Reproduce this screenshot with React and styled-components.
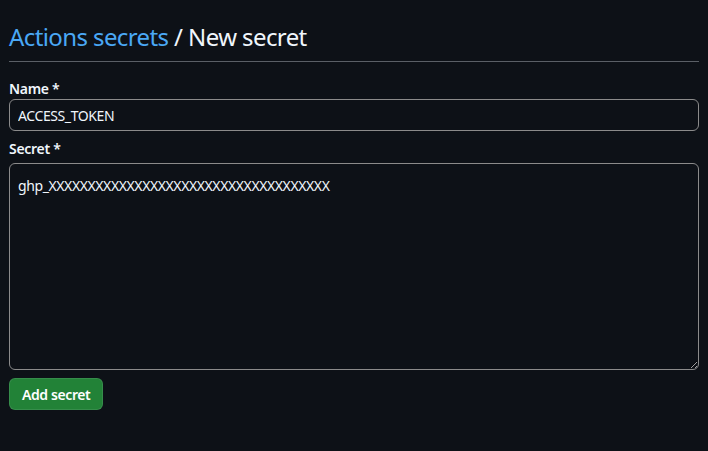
import styled, { createGlobalStyle } from "styled-components";

const GlobalStyle = createGlobalStyle`
  html, body {
    margin: 0;
    background: #0d1117;
  }
  body {
    font-family: "Noto Sans", "Open Sans", sans-serif;
    color: #e6edf3;
  }
`;

function App() {
  return (
    <>
      <GlobalStyle />
      <Page>
        <Header>
          <Title>
            <Crumb href="#">Actions secrets</Crumb> / New secret
          </Title>
        </Header>
        <Form>
          <Field>
            <Label>Name *</Label>
            <Input defaultValue="ACCESS_TOKEN" />
          </Field>
          <Field>
            <Label>Secret *</Label>
            <TextArea defaultValue="ghp_XXXXXXXXXXXXXXXXXXXXXXXXXXXXXXXXXXXX" />
          </Field>
          <Actions>
            <Button type="button">Add secret</Button>
          </Actions>
        </Form>
      </Page>
    </>
  );
}

export default App;

/////////// styled-component

const Page = styled.div`
  padding: 0 9px;
  height: 451px;
  box-sizing: border-box;
`;

const Header = styled.div`
  padding-top: 22px;
  padding-bottom: 9px;
  border-bottom: 1px solid #5a5f66;
`;

const Title = styled.h1`
  margin: 0;
  font-size: 24px;
  font-weight: 400;
  line-height: 30px;
  letter-spacing: -0.6px;
  color: #f0f6fc;
`;

const Crumb = styled.a`
  color: #4aa8f5;
  text-decoration: none;
`;

const Form = styled.div`
  display: flex;
  flex-direction: column;
  padding-top: 17px;
`;

const Field = styled.div`
  display: flex;
  flex-direction: column;
  margin-bottom: 8px;
`;

const Label = styled.label`
  font-size: 14px;
  font-weight: 600;
  line-height: 20px;
  letter-spacing: -0.3px;
  color: #f0f6fc;
`;

const Input = styled.input`
  box-sizing: border-box;
  height: 32px;
  padding: 5px 8px;
  font-family: inherit;
  font-size: 14px;
  letter-spacing: -0.4px;
  color: #f0f6fc;
  background: #0d1117;
  border: 1px solid #8b8b8b;
  border-radius: 6px;
  outline: none;
`;

const TextArea = styled.textarea`
  box-sizing: border-box;
  height: 207px;
  margin-top: 4px;
  padding: 12px 8px;
  font-family: inherit;
  font-size: 14px;
  letter-spacing: -0.4px;
  color: #f0f6fc;
  background: #0d1117;
  border: 1px solid #8b8b8b;
  border-radius: 6px;
  outline: none;
  resize: vertical;
`;

const Actions = styled.div`
  display: flex;
`;

const Button = styled.button`
  height: 32px;
  padding: 0 12px;
  font-family: inherit;
  font-size: 14px;
  font-weight: 600;
  letter-spacing: -0.4px;
  color: #ffffff;
  background: #228237;
  border: 1px solid rgba(240, 246, 252, 0.1);
  border-radius: 6px;
  cursor: pointer;
`;
